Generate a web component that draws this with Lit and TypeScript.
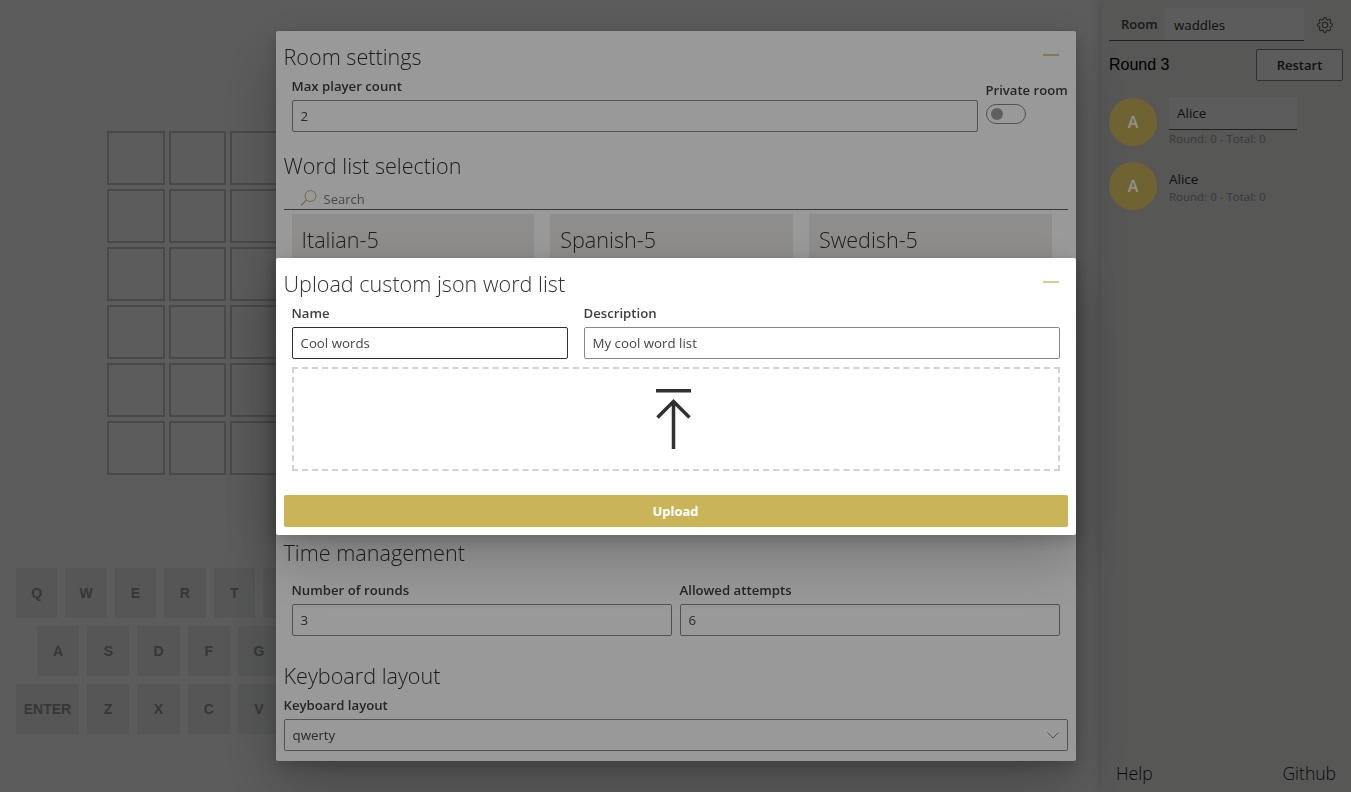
import { LitElement, html, css, svg } from "lit";
import { customElement } from "lit/decorators.js";

const GEAR = svg`<path d="M8 4.754a3.246 3.246 0 1 0 0 6.492 3.246 3.246 0 0 0 0-6.492zM5.754 8a2.246 2.246 0 1 1 4.492 0 2.246 2.246 0 0 1-4.492 0z"/><path d="M9.796 1.343c-.527-1.79-3.065-1.79-3.592 0l-.094.319a.873.873 0 0 1-1.255.52l-.292-.16c-1.64-.892-3.433.902-2.54 2.541l.159.292a.873.873 0 0 1-.52 1.255l-.319.094c-1.79.527-1.79 3.065 0 3.592l.319.094a.873.873 0 0 1 .52 1.255l-.16.292c-.892 1.64.901 3.434 2.541 2.54l.292-.159a.873.873 0 0 1 1.255.52l.094.319c.527 1.79 3.065 1.79 3.592 0l.094-.319a.873.873 0 0 1 1.255-.52l.292.16c1.64.893 3.434-.902 2.54-2.541l-.159-.292a.873.873 0 0 1 .52-1.255l.319-.094c1.79-.527 1.79-3.065 0-3.592l-.319-.094a.873.873 0 0 1-.52-1.255l.16-.292c.893-1.64-.902-3.433-2.541-2.54l-.292.159a.873.873 0 0 1-1.255-.52l-.094-.319zm-2.633.283c.246-.835 1.428-.835 1.674 0l.094.319a1.873 1.873 0 0 0 2.693 1.115l.291-.16c.764-.415 1.6.42 1.184 1.185l-.159.292a1.873 1.873 0 0 0 1.116 2.692l.318.094c.835.246.835 1.428 0 1.674l-.319.094a1.873 1.873 0 0 0-1.115 2.693l.16.291c.415.764-.42 1.6-1.185 1.184l-.291-.159a1.873 1.873 0 0 0-2.693 1.116l-.094.318c-.246.835-1.428.835-1.674 0l-.094-.319a1.873 1.873 0 0 0-2.692-1.115l-.292.16c-.764.415-1.6-.42-1.184-1.185l.159-.291A1.873 1.873 0 0 0 1.945 8.93l-.319-.094c-.835-.246-.835-1.428 0-1.674l.319-.094A1.873 1.873 0 0 0 3.06 4.377l-.16-.292c-.415-.764.42-1.6 1.185-1.184l.292.159a1.873 1.873 0 0 0 2.692-1.115l.094-.319z"/>`;

// keys that sit behind the settings dialog keep their box but show no letter
const ROWS = ["QWERT_____", "ASDFG____", "ZXCV___"];

const keyLabel = (k: string) => (k === "_" ? "" : k);

@customElement("app-root")
export class AppRoot extends LitElement {
  static styles = css`
    :host {
      display: block;
      height: 792px;
      overflow: hidden;
      font-family: "Open Sans", "Noto Sans", sans-serif;
      color: #323130;
      font-size: 14px;
      background: #fff;
    }
    * {
      box-sizing: border-box;
    }
    .page {
      display: flex;
      height: 792px;
    }
    .game {
      width: 518px;
      display: flex;
      flex-direction: column;
      align-items: center;
      padding-top: 131px;
    }
    .board {
      display: grid;
      grid-template-columns: repeat(5, 57.4px);
      grid-auto-rows: 54px;
      gap: 4px;
      margin-right: 0.2px;
    }
    .cell {
      border: 2px solid #cccccc;
    }
    .keyboard {
      width: 486px;
      margin-top: 93px;
      display: flex;
      flex-direction: column;
      gap: 8px;
    }
    .key-row {
      display: flex;
      gap: 8px;
    }
    .key-row.mid {
      padding: 0 21px;
    }
    .key {
      flex: 1;
      height: 50px;
      background: #eef0f0;
      color: #9a9a9a;
      display: flex;
      align-items: center;
      justify-content: center;
      font: bold 14px "Liberation Sans", Arial, sans-serif;
    }
    .key.wide {
      flex: 0 0 63px;
    }
    .spacer {
      flex: 1;
    }
    .side {
      width: 250px;
      background: #f3f2f1;
      box-shadow: 0 0 10px rgba(0, 0, 0, 0.2);
      padding: 8px 8px 0;
      display: flex;
      flex-direction: column;
    }
    .room-row {
      display: flex;
      align-items: flex-start;
    }
    .room-box {
      width: 195px;
      height: 33px;
      border-bottom: 1px solid #605e5c;
      display: flex;
    }
    .room-label {
      width: 56px;
      padding-left: 12px;
      font-weight: 600;
      font-size: 13px;
      line-height: 32px;
      color: #484644;
    }
    .room-val {
      flex: 1;
      background: #fff;
      padding-left: 9px;
      line-height: 34px;
      font-size: 13.3px;
    }
    .gear {
      width: 16px;
      height: 16px;
      margin: 9px 0 0 13px;
      fill: #605e5c;
    }
    .round-row {
      display: flex;
      justify-content: space-between;
      align-items: center;
      margin-top: 8px;
    }
    .round {
      font: 16px "Liberation Sans", Arial, sans-serif;
      color: #000;
    }
    .restart {
      width: 87px;
      height: 32px;
      border: 1px solid #8a8886;
      border-radius: 2px;
      background: #fff;
      font: 600 13px "Open Sans", sans-serif;
      color: #323130;
    }
    .player {
      display: flex;
      gap: 12px;
      margin-top: 16px;
      height: 48px;
    }
    .player.first {
      margin-top: 17px;
    }
    /* sits above the first dim layer, so it stays brighter than the page */
    .avatar {
      position: relative;
      z-index: 15;
      width: 48px;
      height: 48px;
      border-radius: 50%;
      background: #b9a652;
      color: #f2f2f2;
      font-weight: 600;
      font-size: 16px;
      display: flex;
      align-items: center;
      justify-content: center;
    }
    .pinfo {
      display: flex;
      flex-direction: column;
    }
    .pname-edit {
      width: 128px;
      height: 33px;
      background: #fff;
      border-bottom: 1px solid #605e5c;
      padding-left: 8px;
      line-height: 33px;
      margin-top: -1px;
      font-size: 13.5px;
    }
    .pname {
      font-size: 13.5px;
      line-height: 18px;
      margin-top: 8px;
    }
    .pscore {
      font-size: 11.5px;
      line-height: 16px;
      color: #a19f9d;
      margin-top: 1px;
    }
    .side-foot {
      margin-top: auto;
      display: flex;
      justify-content: space-between;
      padding: 0 7px 7px 7px;
      font-size: 17.5px;
      font-weight: 300;
      line-height: 24px;
      color: #201f1e;
    }
    .overlay {
      position: fixed;
      inset: 0;
      background: rgba(0, 0, 0, 0.4);
      display: flex;
      align-items: center;
      justify-content: center;
    }
    .overlay.one {
      z-index: 10;
    }
    .overlay.two {
      z-index: 20;
    }
    .modal {
      width: 800px;
      background: #fff;
      padding: 0 8px;
      border-radius: 2px;
      box-shadow: rgba(0, 0, 0, 0.22) 0 25.6px 57.6px,
        rgba(0, 0, 0, 0.18) 0 4.8px 14.4px;
    }
    .overlay.one .modal {
      height: 730px;
      position: relative;
      z-index: 16;
    }
    .overlay.two .modal {
      height: 277px;
    }
    .head {
      display: flex;
      justify-content: space-between;
      padding-top: 12px;
    }
    h2 {
      margin: 0;
      font-size: 21.6px;
      font-weight: 300;
      line-height: 28px;
      color: #323130;
    }
    .dash {
      width: 16px;
      height: 2px;
      margin: 11px 9px 0 0;
      background: #d9cb8e;
    }
    label {
      display: block;
      font-size: 13.2px;
      font-weight: 600;
      line-height: 21px;
      padding: 5px 0 3px;
      height: 29px;
      color: #403f3d;
    }
    .input {
      width: 100%;
      height: 32px;
      border: 1px solid #8a8886;
      border-radius: 2px;
      padding: 0 8px;
      background: transparent;
      font: 400 13.3px "Open Sans", sans-serif;
      color: #484644;
      display: block;
      outline: none;
    }
    .input.focus {
      border-color: #323130;
    }
    .row {
      display: flex;
      gap: 8px;
      padding: 0 8px;
    }
    .grow {
      flex: 1;
    }
    .private {
      width: 82px;
      margin-right: -8px;
      padding-top: 4px;
    }
    .private label {
      white-space: nowrap;
      font-size: 13.1px;
    }
    .toggle {
      width: 40px;
      height: 20px;
      border: 1px solid #8a8886;
      border-radius: 10px;
      padding: 3px 4px;
    }
    .knob {
      width: 12px;
      height: 12px;
      border-radius: 50%;
      background: #a19f9d;
    }
    .section {
      margin-top: 20px;
    }
    .search {
      margin-top: 6px;
      height: 24px;
      border-bottom: 1px solid #605e5c;
      display: flex;
      align-items: center;
      padding-left: 16px;
      gap: 7px;
      font-size: 13px;
      color: #797775;
    }
    .search span {
      padding-top: 2px;
    }
    .search svg {
      display: block;
    }
    .words {
      margin-top: 4px;
      height: 325px;
      overflow: hidden;
      padding-left: 8px;
      display: grid;
      grid-template-columns: repeat(3, 242.7px);
      grid-auto-rows: 120px;
      gap: 16px;
    }
    .card {
      background: #edebe9;
      padding: 10px;
      font-size: 21.6px;
      font-weight: 300;
      line-height: 32px;
    }
    .time .row {
      margin-top: 8px;
    }
    .time .cell-field {
      width: 380px;
    }
    .layout {
      margin-top: 26px;
    }
    .select {
      display: flex;
      align-items: center;
      justify-content: space-between;
      padding-right: 8px;
    }
    .upload-fields {
      display: flex;
      gap: 16px;
      padding: 0 8px;
    }
    .name-field {
      width: 276px;
    }
    .drop {
      margin: 8px 8px 0;
      height: 104px;
      border: 2px dashed #d2d2d7;
      display: flex;
      align-items: center;
      justify-content: center;
    }
    .drop svg {
      display: block;
      stroke: #323130;
      fill: none;
      stroke-width: 3.5;
    }
    .upload-btn {
      margin-top: 24px;
      width: 100%;
      height: 32px;
      border: 0;
      border-radius: 2px;
      background: #c9b458;
      color: #fff;
      font: 700 13px "Open Sans", sans-serif;
    }
  `;

  render() {
    return html`
      <div class="page">
        <div class="game">
          <div class="board">
            ${Array.from({ length: 30 }, () => html`<div class="cell"></div>`)}
          </div>
          <div class="keyboard">
            <div class="key-row">
              ${[...ROWS[0]].map((k) => html`<div class="key">${keyLabel(k)}</div>`)}
            </div>
            <div class="key-row mid">
              ${[...ROWS[1]].map((k) => html`<div class="key">${keyLabel(k)}</div>`)}
            </div>
            <div class="key-row">
              <div class="key wide">ENTER</div>
              ${[...ROWS[2]].map((k) => html`<div class="key">${keyLabel(k)}</div>`)}
              <div class="key wide"></div>
            </div>
          </div>
        </div>
        <div class="spacer"></div>
        <div class="side">
          <div class="room-row">
            <div class="room-box">
              <div class="room-label">Room</div>
              <div class="room-val">waddles</div>
            </div>
            <svg class="gear" viewBox="0 0 16 16">${GEAR}</svg>
          </div>
          <div class="round-row">
            <div class="round">Round 3</div>
            <button class="restart">Restart</button>
          </div>
          <div class="player first">
            <div class="avatar">A</div>
            <div class="pinfo">
              <div class="pname-edit">Alice</div>
              <div class="pscore">Round: 0 - Total: 0</div>
            </div>
          </div>
          <div class="player">
            <div class="avatar">A</div>
            <div class="pinfo">
              <div class="pname">Alice</div>
              <div class="pscore">Round: 0 - Total: 0</div>
            </div>
          </div>
          <div class="side-foot"><span>Help</span><span>Github</span></div>
        </div>
      </div>

      <div class="overlay one">
        <div class="modal">
          <div class="head">
            <h2>Room settings</h2>
            <div class="dash"></div>
          </div>
          <div class="row">
            <div class="grow">
              <label>Max player count</label>
              <input class="input" value="2" />
            </div>
            <div class="private">
              <label>Private room</label>
              <div class="toggle"><div class="knob"></div></div>
            </div>
          </div>
          <div class="section">
            <h2>Word list selection</h2>
            <div class="search">
              <svg width="17" height="16" viewBox="0 0 17 16" fill="none" stroke="#c9b458">
                <circle cx="10.5" cy="6" r="5.500" />
                <path d="M6.500 10 1 15.500" stroke-width="1.300" />
              </svg>
              <span>Search</span>
            </div>
            <div class="words">
              <div class="card">Italian-5</div>
              <div class="card">Spanish-5</div>
              <div class="card">Swedish-5</div>
            </div>
          </div>
          <div class="time">
            <h2>Time management</h2>
            <div class="row">
              <div class="cell-field">
                <label>Number of rounds</label>
                <input class="input" value="3" />
              </div>
              <div class="cell-field">
                <label>Allowed attempts</label>
                <input class="input" value="6" />
              </div>
            </div>
          </div>
          <div class="layout">
            <h2>Keyboard layout</h2>
            <label>Keyboard layout</label>
            <div class="input select">
              <span>qwerty</span>
              <svg width="12" height="7" viewBox="0 0 12 7" fill="none" stroke="#8a8886">
                <path d="M.5.5 6 6l5.500-5.500" />
              </svg>
            </div>
          </div>
        </div>
      </div>

      <div class="overlay two">
        <div class="modal">
          <div class="head">
            <h2>Upload custom json word list</h2>
            <div class="dash"></div>
          </div>
          <div class="upload-fields">
            <div class="name-field">
              <label>Name</label>
              <input class="input focus" value="Cool words" />
            </div>
            <div class="grow">
              <label>Description</label>
              <input class="input" value="My cool word list" />
            </div>
          </div>
          <div class="drop">
            <svg width="40" height="60" viewBox="0 0 40 60">
              <path d="M0 1.750H35M17.500 60V12.500M1.500 28.500l16-16 16 16" />
            </svg>
          </div>
          <button class="upload-btn">Upload</button>
        </div>
      </div>
    `;
  }
}
